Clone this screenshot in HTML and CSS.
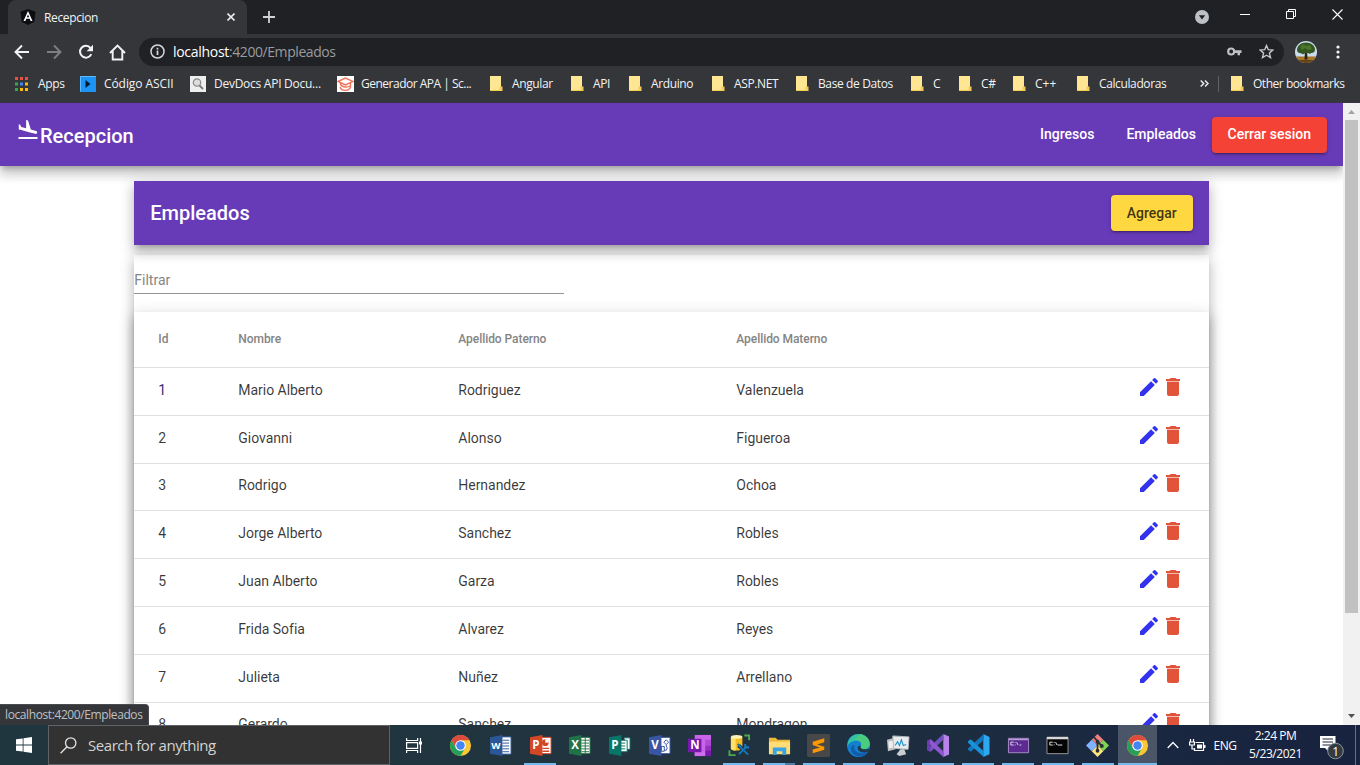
FILE: index.html
```html
<!DOCTYPE html>
<html lang="es">
<head>
<meta charset="utf-8">
<title>Recepcion</title>
<link rel="stylesheet" href="styles.css">
</head>
<body>
<svg class="defs" width="0" height="0">
  <symbol id="edit" viewBox="0 0 24 24"><path d="M3 17.25V21h3.75L17.81 9.94l-3.75-3.75L3 17.25zM20.71 7.04a1 1 0 0 0 0-1.41l-2.34-2.34a1 1 0 0 0-1.41 0l-1.83 1.83 3.75 3.75 1.83-1.83z"/></symbol>
  <symbol id="delete" viewBox="0 0 24 24"><path d="M6 19c0 1.100.9 2 2 2h8c1.100 0 2-.9 2-2V7H6v12zM19 4h-3.500l-1-1h-5l-1 1H5v2h14V4z"/><path d="M6 6h12v1H6z" opacity=".4"/></symbol>
  <symbol id="folder" viewBox="0 0 13 15"><path d="M0 0h11v10.500h1.500V15H0z" fill="#f4cd57"/><path d="M0 0h11v10l-1.500 1v3H0z" fill="#ffe693"/></symbol>
  <symbol id="chrome" viewBox="0 0 24 24"><circle cx="12" cy="12" r="11" fill="#fbc734"/><path d="M2.500 6.500A11 11 0 0 1 21.500 6.500H12L7.200 14.700z" fill="#dd4b3e"/><path d="M2.500 6.500A11 11 0 0 0 12 23l4.800-8.300L12 17l-4.800-2.300z" fill="#25a05a"/><circle cx="12" cy="12" r="5.500" fill="#fff"/><circle cx="12" cy="12" r="4.400" fill="#4285f4"/></symbol>
</svg>

<header class="browser">
  <div class="tabstrip">
    <div class="tab">
      <svg class="fav" width="16" height="16" viewBox="0 0 16 16"><path d="M8 0l7.500 2.700-1.200 10L8 16l-6.300-3.300L.5 2.700z" fill="#0c0d10"/><path d="M8 2L3.500 12h1.900l.9-2.200h3.400l.9 2.200h1.900zM8 5.500l1.200 2.800H6.800z" fill="#fff"/></svg>
      <span class="tab-title">Recepcion</span>
      <svg class="tab-x" width="8" height="8" viewBox="0 0 8 8"><path d="M.5.5l7 7M7.500.5l-7 7" stroke="#e8eaed" stroke-width="1.600"/></svg>
    </div>
    <svg class="plus" width="12" height="12" viewBox="0 0 12 12"><path d="M6 0v12M0 6h12" stroke="#d0d2d6" stroke-width="1.800"/></svg>
    <div class="window-buttons">
      <svg width="14" height="14" viewBox="0 0 14 14"><circle cx="7" cy="7" r="7" fill="#bdc1c6"/><path d="M3.800 5.200h6.400L7 9.500z" fill="#202124"/></svg>
      <svg width="10" height="10" viewBox="0 0 10 10"><path d="M0 5.500h10" stroke="#fff"/></svg>
      <svg width="10" height="10" viewBox="0 0 10 10" fill="none" stroke="#fff"><path d="M.5 2.500h7v7h-7zM2.500 2.500v-2h7v7h-2"/></svg>
      <svg width="11" height="11" viewBox="0 0 11 11"><path d="M.5.5l10 10M10.500.5l-10 10" stroke="#fff" stroke-width="1.100"/></svg>
    </div>
  </div>
  <div class="toolbar">
    <div class="nav-icons">
      <svg width="16" height="16" viewBox="0 0 16 16" fill="none" stroke="#f1f3f4" stroke-width="1.900"><path d="M15 8H2M8 1.500L1.500 8 8 14.500"/></svg>
      <svg width="16" height="16" viewBox="0 0 16 16" fill="none" stroke="#7d7f83" stroke-width="1.900"><path d="M1 8h13M8 1.500L14.500 8 8 14.500"/></svg>
      <svg width="16" height="16" viewBox="0 0 16 16"><path d="M13.300 10.200A5.900 5.900 0 1 1 12.500 4" fill="none" stroke="#f1f3f4" stroke-width="2"/><path d="M15 .8v6.400H8.600z" fill="#f1f3f4"/></svg>
      <svg class="home" width="17" height="17" viewBox="0 0 17 17" fill="none" stroke="#f1f3f4" stroke-width="1.900"><path d="M1 9l7.500-7.500L16 9M3.700 7v8.500h9.600V7"/></svg>
    </div>
    <div class="omnibox">
      <svg width="15" height="15" viewBox="0 0 15 15"><circle cx="7.500" cy="7.500" r="6.500" fill="none" stroke="#d5d7da" stroke-width="1.500"/><path d="M7.500 6.500V11M7.500 3.800v1.700" stroke="#d5d7da" stroke-width="1.700"/></svg>
      <span class="url"><b>localhost</b>:4200/Empleados</span>
      <svg class="key" width="15" height="9" viewBox="0 0 15 9"><circle cx="4.200" cy="4.500" r="3" fill="none" stroke="#bfc1c5" stroke-width="2.200"/><path d="M7.500 3.300H14.500V6H13v2.200h-2.500V6h-3z" fill="#bfc1c5"/></svg>
      <svg width="15" height="15" viewBox="0 0 15 15"><path d="M7.500 1.500l1.800 4.200 4.600.4-3.500 3 1.100 4.500-4-2.400-4 2.400 1.100-4.500-3.500-3 4.600-.4z" fill="none" stroke="#c4c6ca" stroke-width="1.400"/></svg>
    </div>
    <svg class="avatar" width="22" height="22" viewBox="0 0 22 22"><clipPath id="av"><circle cx="11" cy="11" r="11"/></clipPath><g clip-path="url(#av)"><path d="M0 0h22v22H0z" fill="#c9dcf0"/><path d="M0 15.500h22V22H0z" fill="#a87525"/><path d="M0 19h22v3H0z" fill="#62431a"/><path d="M10 9h2l.5 9.500h-3z" fill="#2c2314"/><path d="M2 9c0-4 4-7.500 9-7.500S20.500 5 20 9s-4 2-5 4c-2-1.500-5-1-7 .5-1-2-6-.5-6-4.500z" fill="#34571f"/><path d="M5 6l3-3 3 2 4-1 2 4-4 1-3-2-3 2z" fill="#4c752d"/></g></svg>
    <svg class="kebab" width="4" height="14" viewBox="0 0 4 14" fill="#f1f3f4"><circle cx="2" cy="2" r="1.600"/><circle cx="2" cy="7" r="1.600"/><circle cx="2" cy="12" r="1.600"/></svg>
  </div>
  <nav class="bookmarks">
    <span class="bm bm-apps"><svg width="13" height="14" viewBox="0 0 13 14"><path d="M0 0h3v3H0zM5 0h3v3H5zM10 0h3v3h-3z" fill="#ee4e43"/><path d="M0 5.500h3v3H0zM0 11h3v3H0z" fill="#34a853"/><path d="M5 5.500h3v3H5z" fill="#4285f4"/><path d="M5 11h3v3H5zM10 5.500h3v3h-3zM10 11h3v3h-3z" fill="#fbbc05"/></svg>Apps</span>
    <span class="bm bm-ascii"><svg width="16" height="16" viewBox="0 0 16 16"><path d="M0 0h16v16H0z" fill="#1b94f5"/><path d="M.5 15.500V.5h15" stroke="#62b9fb" fill="none"/><path d="M5.500 4l5 4-5 4z" fill="#061b31"/></svg>Código ASCII</span>
    <span class="bm bm-dev"><svg width="16" height="16" viewBox="0 0 16 16"><path d="M0 0h16v16H0z" fill="#eee"/><circle cx="7" cy="6.500" r="3.700" fill="#ddd" stroke="#888" stroke-width="1.200"/><path d="M9.500 9.500l3.500 3.500" stroke="#777" stroke-width="1.800"/></svg>DevDocs API Docu...</span>
    <span class="bm bm-apa"><svg width="17" height="16" viewBox="0 0 17 16" fill="none"><path d="M0 0h17v16H0z" fill="#fff"/><path d="M1 5.500L8.500 2 16 5.500 8.500 9zM3.500 7v1.500c2 3 7 3 9.500 1.500M3 11c1.500 4.500 9 4.500 10.500 0V6.500" stroke="#f1735b" stroke-width="1.400"/></svg>Generador APA | Sc...</span>
    <span class="bm bm-angular"><svg width="13" height="15"><use href="#folder"/></svg>Angular</span>
    <span class="bm bm-api"><svg width="13" height="15"><use href="#folder"/></svg>API</span>
    <span class="bm bm-arduino"><svg width="13" height="15"><use href="#folder"/></svg>Arduino</span>
    <span class="bm bm-asp"><svg width="13" height="15"><use href="#folder"/></svg>ASP.NET</span>
    <span class="bm bm-datos"><svg width="13" height="15"><use href="#folder"/></svg>Base de Datos</span>
    <span class="bm bm-c"><svg width="13" height="15"><use href="#folder"/></svg>C</span>
    <span class="bm bm-cs"><svg width="13" height="15"><use href="#folder"/></svg>C#</span>
    <span class="bm bm-cpp"><svg width="13" height="15"><use href="#folder"/></svg>C++</span>
    <span class="bm bm-calc"><svg width="13" height="15"><use href="#folder"/></svg>Calculadoras</span>
    <svg class="more" width="9" height="7" viewBox="0 0 9 7"><path d="M.7.5l3 3-3 3M5 .5l3 3-3 3" fill="none" stroke="#e8eaed" stroke-width="1.500"/></svg>
    <span class="bm bm-other"><svg width="13" height="15"><use href="#folder"/></svg>Other bookmarks</span>
  </nav>
</header>

<div class="viewport">
  <div class="page">
    <div class="navbar">
      <svg width="24" height="24" viewBox="0 0 24 24" fill="#fff"><path d="M2.500 19h19v2h-19zM9.680 13.270l4.350 1.160 5.310 1.420c.8.21 1.620-.26 1.840-1.060.21-.8-.26-1.620-1.060-1.840l-5.310-1.420-2.760-9.020L10.120 2v8.280L5.150 8.950l-.93-2.320-1.450-.39v5.170l1.600.43 5.310 1.430z"/></svg>
      <h1>Recepcion</h1>
      <a class="nav-link ingresos">Ingresos</a>
      <a class="nav-link empleados">Empleados</a>
      <button class="btn logout">Cerrar sesion</button>
    </div>
    <main class="content">
      <div class="titlebar"><h2>Empleados</h2><button class="btn add">Agregar</button></div>
      <section class="panel">
        <div class="filter"><div class="field">Filtrar</div></div>
        <div class="table">
          <div class="row head"><span>Id</span><span>Nombre</span><span>Apellido Paterno</span><span>Apellido Materno</span></div>
          <div class="row"><span class="visited">1</span><span>Mario Alberto</span><span>Rodriguez</span><span>Valenzuela</span><span class="actions"><svg class="edit"><use href="#edit"/></svg><svg class="del"><use href="#delete"/></svg></span></div>
          <div class="row"><span>2</span><span>Giovanni</span><span>Alonso</span><span>Figueroa</span><span class="actions"><svg class="edit"><use href="#edit"/></svg><svg class="del"><use href="#delete"/></svg></span></div>
          <div class="row"><span>3</span><span>Rodrigo</span><span>Hernandez</span><span>Ochoa</span><span class="actions"><svg class="edit"><use href="#edit"/></svg><svg class="del"><use href="#delete"/></svg></span></div>
          <div class="row"><span>4</span><span>Jorge Alberto</span><span>Sanchez</span><span>Robles</span><span class="actions"><svg class="edit"><use href="#edit"/></svg><svg class="del"><use href="#delete"/></svg></span></div>
          <div class="row"><span>5</span><span>Juan Alberto</span><span>Garza</span><span>Robles</span><span class="actions"><svg class="edit"><use href="#edit"/></svg><svg class="del"><use href="#delete"/></svg></span></div>
          <div class="row"><span>6</span><span>Frida Sofia</span><span>Alvarez</span><span>Reyes</span><span class="actions"><svg class="edit"><use href="#edit"/></svg><svg class="del"><use href="#delete"/></svg></span></div>
          <div class="row"><span>7</span><span>Julieta</span><span>Nuñez</span><span>Arrellano</span><span class="actions"><svg class="edit"><use href="#edit"/></svg><svg class="del"><use href="#delete"/></svg></span></div>
          <div class="row"><span>8</span><span>Gerardo</span><span>Sanchez</span><span>Mondragon</span><span class="actions"><svg class="edit"><use href="#edit"/></svg><svg class="del"><use href="#delete"/></svg></span></div>
        </div>
      </section>
    </main>
  </div>
  <div class="scrollbar">
    <svg width="7" height="4" viewBox="0 0 7 4"><path d="M0 4l3.500-4L7 4z" fill="#a3a3a3"/></svg>
    <div class="thumb"></div>
    <svg class="down" width="7" height="4" viewBox="0 0 7 4"><path d="M0 0l3.500 4L7 0z" fill="#505050"/></svg>
  </div>
  <div class="status">localhost:4200/Empleados</div>
</div>

<footer class="taskbar">
  <div class="start"><svg width="16" height="16" viewBox="0 0 16 16" fill="#fff"><path d="M0 2.300L6.700 1.400v6.200H0zM7.500 1.300L16 0v7.600H7.500zM0 8.400h6.700v6.200L0 13.700zM7.500 8.400H16V16l-8.500-1.300z"/></svg></div>
  <div class="search"><svg width="17" height="17" viewBox="0 0 17 17" fill="none" stroke="#e6e6e6" stroke-width="1.300"><circle cx="10.700" cy="6" r="5.200"/><path d="M7 9.700L.6 16.200"/></svg><span>Search for anything</span></div>
  <div class="taskview"><svg width="17" height="15" viewBox="0 0 17 15" fill="none" stroke="#fff" stroke-width="1.200"><path d="M.6 0v2.500h11V0M.6 15v-2.500h11V15M.6 4.700h11v5.600H.6zM14.500 0v15"/><path d="M13 3.500h3v3h-3z" fill="#fff" stroke="none"/></svg></div>
  <div class="apps">
    <div class="app"><svg><use href="#chrome"/></svg></div>
    <div class="app"><svg viewBox="0 0 24 24"><path d="M12 3h11v18H12z" fill="#fff" stroke="#2b5797"/><path d="M14 6.500h7M14 9.500h7M14 12.500h7M14 15.500h7M14 18.500h7" stroke="#2b5797"/><path d="M1 3.500L14 1v22L1 20.500z" fill="#2b5797"/><text class="wide" x="2.300" y="16">W</text></svg></div>
    <div class="app open"><svg viewBox="0 0 24 24"><path d="M12 3.500h11v17H12z" fill="#fff" stroke="#d24726"/><circle cx="17" cy="9" r="3.500" fill="#d24726"/><path d="M17 9V5.500h3.500V9z" fill="#fff"/><path d="M14 15h7M14 18h7" stroke="#d24726" stroke-width="1.500"/><path d="M1 3.500L14 1v22L1 20.500z" fill="#d24726"/><text x="3.500" y="16">P</text></svg></div>
    <div class="app"><svg viewBox="0 0 24 24"><path d="M12 3.500h11v17H12z" fill="#fff" stroke="#217346"/><path d="M14 6.500h8M14 9.500h8M14 12.500h8M14 15.500h8M14 18.500h8M18 4v16" stroke="#217346"/><path d="M1 3.500L14 1v22L1 20.500z" fill="#217346"/><text x="3.500" y="16">X</text></svg></div>
    <div class="app"><svg viewBox="0 0 24 24"><path d="M12 6.500h8v12h-8zM17 4h6v12h-3" fill="#fff" stroke="#077568"/><path d="M13 9.500h5M13 12.500h5M13 15.500h5" stroke="#077568"/><path d="M1 3.500L14 1v22L1 20.500z" fill="#077568"/><text x="3.500" y="16">P</text></svg></div>
    <div class="app"><svg viewBox="0 0 24 24"><path d="M12 3.500h11v17H12z" fill="#fff" stroke="#3955a3"/><path d="M19 6l2.500 2.500L19 11l-2.500-2.500zM14 13h3v5h-3zM19 11c0 3 2 3 0 6h-2" fill="none" stroke="#3955a3"/><path d="M1 3.500L14 1v22L1 20.500z" fill="#3955a3"/><text x="3.300" y="16">V</text></svg></div>
    <div class="app"><svg viewBox="0 0 24 24"><path d="M7 1h17v22H7z" fill="#ca64ea"/><path d="M18 6h6v6h-6z" fill="#ae4bd5"/><path d="M18 12h6v5h-6z" fill="#9332bf"/><path d="M7 17h17v6H7z" fill="#7719aa"/><path d="M7 17h11v6H7z" fill="#d06ded"/><path d="M0 5h14v14H0z" fill="#7719aa"/><text x="2.300" y="16">N</text></svg></div>
    <div class="app open"><svg viewBox="0 0 24 24"><path d="M3 3v12c0 3 12 3 12 0V3z" fill="#f6bd22"/><path d="M3 3v12c0 1.500 4 2.300 5 2.300V3z" fill="#ffe06b"/><ellipse cx="9" cy="3" rx="6" ry="2" fill="#fff2b5"/><path d="M17 1.500h5v5M1.500 17v5H8" fill="none" stroke="#4fa74b" stroke-width="2"/><path d="M11 12l10 9M20 12L11 21" stroke="#21343f" stroke-width="4"/><path d="M12 13l9 8.500M19 13.500L11.500 21" stroke="#1678bf" stroke-width="1.900"/><path d="M10 10.500l3.500 3M18 10.500v3.500h4" fill="none" stroke="#1678bf" stroke-width="2.200"/></svg></div>
    <div class="app open multi"><svg viewBox="0 0 24 24"><path d="M1 4h7l2 2h13v15H1z" fill="#f0b83a"/><path d="M1 8h22v13H1z" fill="#ffdc76"/><path d="M5 22v-8h14v8h-4v-4H9v4z" fill="#39a2e4"/></svg></div>
    <div class="app open"><svg viewBox="0 0 24 24"><rect width="24" height="24" rx="1.500" fill="#484848"/><path d="M18 4.500v4L10.500 11 18 13.200v3.300L6 20.200v-4L13.500 14 6 11.500V8z" fill="#ff9800"/></svg></div>
    <div class="app open"><svg viewBox="0 0 24 24"><circle cx="12" cy="12" r="12" fill="#137fcf"/><path d="M1 9C3 1 11-1.500 17 1c6 3 9 10 5 13.500-3 2.500-8 1-8-1 2-2 1-6-3-6.500C6 6.500 2 9 0 13z" fill="#31c3a4"/><path d="M14 0c7 1 11 7 9.500 12-2 5-9.500 4-9.500 1.500 3-4-1-8-7-7z" fill="#55cf6f" opacity=".7"/><path d="M14 13.500c0 2 5 3.500 8.500 1.500L24 18l-4 1c-6 1-10-2-8.500-6 2-2 3-1 2.500.5z" fill="#203a4b"/><path d="M8 12c-2 6 4 10 14 7-4 6-13 6-17 0-2-5 0-8 3-7z" fill="#125dac"/></svg></div>
    <div class="app open"><svg viewBox="0 0 24 24"><path d="M0 6l8-2 1 12-8 2z" fill="#bcc1c4"/><path d="M1.500 8l6-1.500.6 7-6 1.500z" fill="#eee"/><path d="M6 2l17 1-1 13-15-1z" fill="#e9ecee" stroke="#b2b8bc"/><path d="M8.500 12l2.500-4 2 4 2-6 2 6 3-1" fill="none" stroke="#2293cc" stroke-width="1.200"/><path d="M14 16h4l2 5-7 2-3-2z" fill="#c9ced0"/></svg></div>
    <div class="app open"><svg viewBox="0 0 24 24"><path d="M17 0l6 2.500v19L17 24z" fill="#b984ea"/><path d="M17 0v6L4 18.500 1 17V15z" fill="#7252c1"/><path d="M17 24v-6L4 5.500 1 7v2z" fill="#9057d0"/><path d="M0 7l3-1.500V18.500L0 17z" fill="#703bb0"/></svg></div>
    <div class="app open"><svg viewBox="0 0 24 24"><path d="M17 0l6.500 3v18L17 24z" fill="#2ba8ef"/><path d="M17.500 0v6L4 18.500 1 16.500V15z" fill="#1377bd"/><path d="M17.500 24v-6L4 5.500 1 7.500V9z" fill="#1991d8"/></svg></div>
    <div class="app open"><svg viewBox="0 0 24 24"><path d="M1.500 4.500h21v15h-21z" fill="#5b2b91" stroke="#a88bc8"/><path d="M2 5h20v1.500H2z" fill="#b79bd1"/><path d="M7 8.500H4v3h3M8.500 8.500v.8M8.500 11v.8M10 8.500l1.500 3M13 11.500h2" fill="none" stroke="#fff" stroke-width=".8"/></svg></div>
    <div class="app open"><svg viewBox="0 0 24 24"><path d="M1 3.500h22v17H1z" fill="#050505" stroke="#999"/><path d="M1 3h22v2.500H1z" fill="#d8d8d8"/><path d="M7 8.500H4v3h3M8.500 8.500v.8M8.500 11v.8M10 8.500l1.500 3M12 11.500h5" fill="none" stroke="#fff" stroke-width=".9"/></svg></div>
    <div class="app open"><svg viewBox="0 0 24 24"><path d="M12 0l6 6-6 6-6-6z" fill="#f08080"/><path d="M6 6l6 6-6 6-6-6z" fill="#80b3ff"/><path d="M18 6l6 6-6 6-6-6z" fill="#80d353"/><path d="M12 12l6 6-6 6-6-6z" fill="#ffe680"/><path d="M8 3l4 4.500V18M12 8l4.500 4.500" fill="none" stroke="#2e2e30" stroke-width="1.800"/><circle cx="12" cy="8" r="2" fill="#2e2e30"/><circle cx="16.500" cy="12.500" r="2" fill="#2e2e30"/><circle cx="12" cy="17.500" r="2" fill="#2e2e30"/></svg></div>
    <div class="app open active"><svg><use href="#chrome"/></svg></div>
  </div>
  <div class="tray">
    <svg class="chev" width="12" height="8" viewBox="0 0 12 8"><path d="M.7 7L6 1.500 11.300 7" fill="none" stroke="#fff" stroke-width="1.300"/></svg>
    <svg class="battery" width="17" height="13" viewBox="0 0 17 13" fill="none" stroke="#fff" stroke-width="1.200"><path d="M6.500 3.500h8v8h-9V9"/><path d="M15 6h1.500v3H15M8 5.500h5v4H8z" fill="#fff" stroke="none"/><path d="M1.500 0v3M4.500 0v3M.6 3h4.800v3H.6zM3 6v4h2.500"/></svg>
    <span class="lang">ENG</span>
    <div class="clock"><span>2:24 PM</span><span>5/23/2021</span></div>
    <svg class="notif" width="25" height="25" viewBox="0 0 25 25"><path d="M1 1h15.500v12H9v3l-3-3H1z" fill="#fff"/><path d="M3.500 4h10.500M3.500 7h10.500M3.500 10h10.500" stroke="#1a273b" stroke-width="1.200"/><circle cx="16.500" cy="16" r="7.800" fill="#333b43" stroke="#8b929a"/><text x="13.200" y="20.500">1</text></svg>
  </div>
</footer>
</body>
</html>
```
FILE: styles.css
```css
* { box-sizing: border-box; }
body {
  margin: 0;
  width: 1360px;
  height: 765px;
  display: flex;
  flex-direction: column;
  overflow: hidden;
  font-family: Roboto, sans-serif;
  background: #fff;
}
svg { flex: none; display: block; }
.defs { position: absolute; }

/* Browser chrome */
.browser {
  height: 103px;
  flex: none;
  background: #35363a;
  border-bottom: 1px solid #3b3348;
  font-family: "Open Sans", sans-serif;
  color: #f1f3f4;
}
.tabstrip { height: 34px; background: #202124; display: flex; align-items: center; padding-left: 8px; }
.tab { width: 239px; height: 34px; background: #35363a; border-radius: 8px 8px 0 0; display: flex; align-items: center; padding: 0 12px; }
.tab-title { font-size: 12px; letter-spacing: -.36px; margin-left: 8px; flex: 1; }
.plus { margin-left: 16px; }
.window-buttons { margin-left: auto; display: flex; align-items: center; height: 28px; align-self: flex-start; padding-right: 17px; }
.window-buttons svg { margin-right: 36px; }
.window-buttons svg:first-child { margin-right: 31px; margin-top: 5px; }
.window-buttons svg:last-child { margin-right: 0; }

.toolbar { height: 34px; display: flex; align-items: center; padding-left: 14px; padding-top: 2px; }
.nav-icons { display: flex; align-items: center; gap: 16px; width: 125px; }
.home { margin-left: -1px; }
.omnibox { width: 1145px; height: 28px; border-radius: 14px; background: #202124; display: flex; align-items: center; padding: 0 10px 2px 11px; }
.url { flex: 1; margin-left: 8px; font-size: 14px; color: #999ca1; letter-spacing: -.42px; }
.url b { font-weight: 400; color: #fff; letter-spacing: -.3px; }
.key { margin-right: 17px; }
.avatar { margin-left: 11px; }
.kebab { margin-left: 19px; }

.bookmarks { height: 34px; display: flex; align-items: center; padding-left: 15px; padding-bottom: 3px; font-size: 12px; letter-spacing: -.38px; }
.bm { display: flex; align-items: center; gap: 9px; white-space: nowrap; flex: none; }
.bm-apps { width: 65px; gap: 10px; }
.bm-ascii { width: 110px; gap: 8px; letter-spacing: -.08px; }
.bm-dev { width: 147px; gap: 8px; letter-spacing: -.26px; }
.bm-apa { width: 153px; gap: 7px; letter-spacing: -.5px; }
.bm-angular { width: 81px; }
.bm-api { width: 58px; }
.bm-arduino { width: 83px; }
.bm-asp { width: 84px; }
.bm-datos { width: 115px; }
.bm-c { width: 48px; }
.bm-cs { width: 54px; }
.bm-cpp { width: 64px; letter-spacing: 0; }
.bm-calc { width: 123px; }
.more { margin-right: 9px; }
.bm-other { border-left: 1px solid #5f6368; padding-left: 12px; height: 16px; letter-spacing: -.46px; }

/* Page */
.viewport { position: relative; height: 622px; flex: none; display: flex; overflow: hidden; }
.page { width: 1343px; overflow: hidden; }
.navbar, .titlebar { background: #673ab7; height: 64px; display: flex; align-items: center; padding: 0 16px; color: #fff; }
.navbar { height: 63px; }
.navbar, .titlebar, .panel, .table {
  box-shadow: 0 5px 5px -3px rgba(0,0,0,.2), 0 8px 10px 1px rgba(0,0,0,.14), 0 3px 14px 2px rgba(0,0,0,.12);
}
.navbar svg { margin-top: -9px; }
h1, h2 { margin: 0; font-size: 20px; font-weight: 500; flex: 1; }
h1 { padding-top: 2px; }
.nav-link { font-size: 14px; font-weight: 500; padding-bottom: 1px; }
.ingresos { margin-right: 32px; }
.empleados { margin-right: 15.5px; }
.btn {
  height: 36px;
  padding: 0 16px;
  border: 0;
  border-radius: 4px;
  font: 500 14px Roboto, sans-serif;
  white-space: nowrap;
  box-shadow: 0 3px 1px -2px rgba(0,0,0,.2), 0 2px 2px rgba(0,0,0,.14), 0 1px 5px rgba(0,0,0,.12);
}
.logout { background: #f44336; color: #fff; padding-bottom: 1px; }
.add { background: #ffd740; color: rgba(0,0,0,.77); padding-bottom: 1px; }
.content { width: 1074.4px; margin: 15px auto 0; }
.titlebar { margin-bottom: 10px; }
.filter { height: 57px; }
.field { width: 430px; height: 39px; border-bottom: 1px solid #949494; padding-top: 17px; font-size: 14px; line-height: 17px; color: #858585; }
.table { background: #fff; }
.row {
  display: grid;
  grid-template-columns: 80px 220px 278px 1fr auto;
  align-items: center;
  height: 47.8px;
  padding: 0 24px;
  border-bottom: 1px solid #e0e0e0;
  font-size: 14px;
  letter-spacing: -.03px;
  color: rgba(0,0,0,.78);
}
.row > span { padding-bottom: 3px; }
.visited { color: #302f72; }
.row.head { height: 56px; font-size: 12px; font-weight: 500; letter-spacing: -.06px; color: #848484; }
.head > span { padding-bottom: 2px; }
.row .actions { display: flex; padding-bottom: 8px; }
.actions svg { width: 24px; height: 24px; }
.edit { fill: #3333ef; }
.del { fill: #e25439; }

.scrollbar { width: 17px; background: #f1f1f1; display: flex; flex-direction: column; align-items: center; padding: 7px 0; }
.thumb { width: 13px; height: 493px; margin-top: 6px; background: #c1c1c1; }
.down { margin-top: auto; }
.status {
  position: absolute;
  left: 0;
  bottom: 0;
  width: 149px;
  height: 21px;
  padding-left: 5px;
  line-height: 20px;
  background: #35363a;
  border-top: 1px solid #494b50;
  border-right: 1px solid #494b50;
  border-radius: 0 4px 0 0;
  color: #bdc1c6;
  font-family: "Open Sans", sans-serif;
  font-size: 12px;
  letter-spacing: -.4px;
  white-space: nowrap;
}

/* Taskbar */
.taskbar {
  height: 40px;
  flex: none;
  display: flex;
  background: linear-gradient(90deg, #20363f 0, #21343f 50%, #1a2740 85%, #18233f);
  color: #fff;
  font-family: "Open Sans", sans-serif;
}
.start, .taskview { width: 48px; display: flex; align-items: center; justify-content: center; }
.search { width: 342px; background: #323232; border: 1px solid #5d6366; display: flex; align-items: center; padding-left: 11px; font-size: 15px; letter-spacing: -.45px; color: #d2d2d2; }
.search span { margin-left: 11px; }
.taskview { width: 50.5px; padding-right: 2px; }
.apps { display: flex; width: 717px; }
.app { position: relative; flex: 1; display: flex; align-items: center; justify-content: center; }
.app svg { width: 23px; height: 23px; }
.app text { font: 700 12px "Open Sans", sans-serif; fill: #fff; }
.app .wide { font-size: 10px; }
.open::after { content: ""; position: absolute; left: 4px; right: 4px; bottom: 0; height: 2px; background: #76b9ed; }
.multi::after { background: linear-gradient(90deg, #76b9ed 70%, #4b7fa8 70%); }
.active { background: #4a5567; }
.active::after { left: 0; right: 0; }
.tray { flex: 1; display: flex; align-items: center; padding-left: 9px; margin-right: 4px; border-right: 1px solid #667080; font-size: 12px; letter-spacing: -.45px; }
.battery { margin-left: 10px; }
.lang { margin-left: 8px; width: 25px; }
.clock { width: 62px; margin-left: 6px; display: flex; flex-direction: column; align-items: center; line-height: 18px; white-space: nowrap; }
.notif { margin-left: 12px; margin-top: 5px; }
.notif text { font: 12px "Open Sans", sans-serif; fill: #fff; }
```
